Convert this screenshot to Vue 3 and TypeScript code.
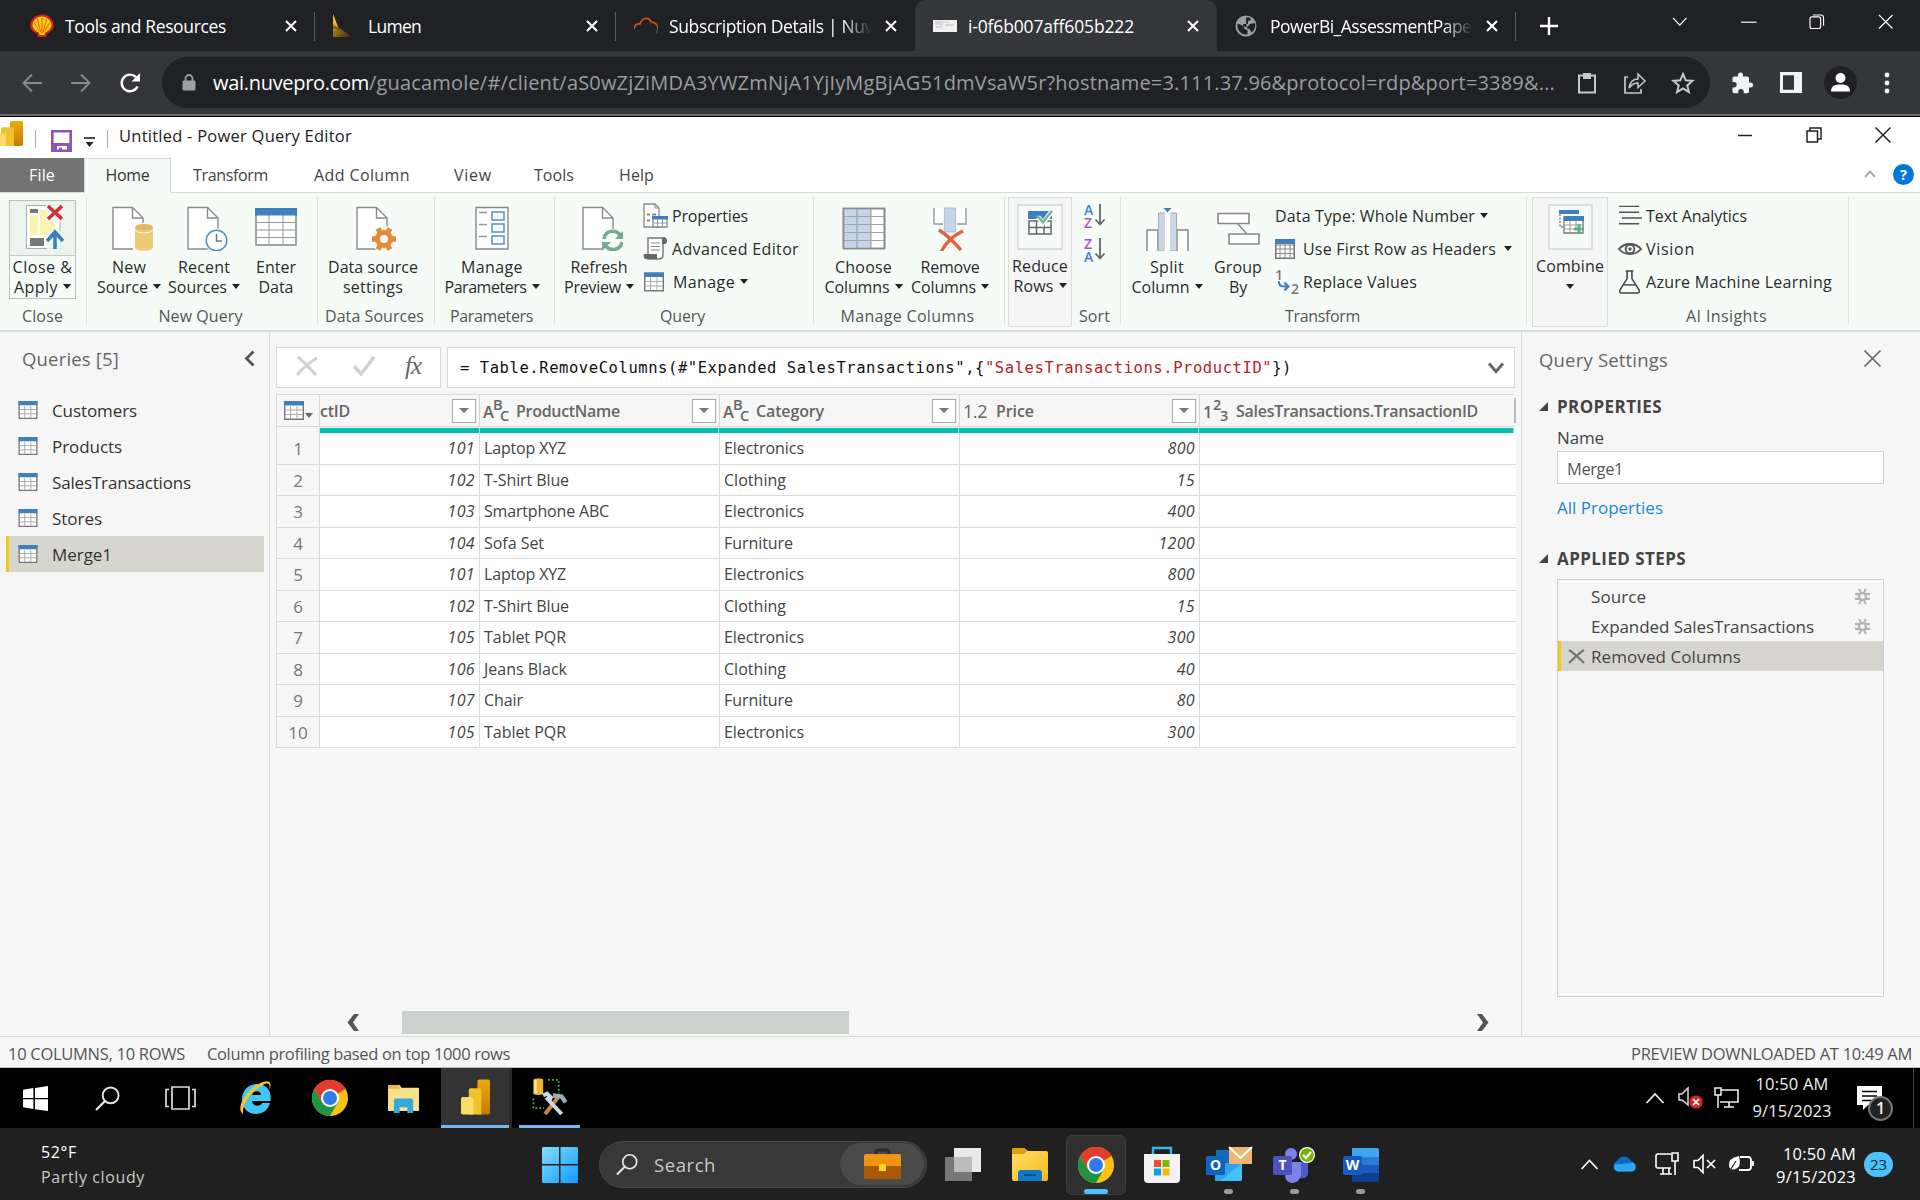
<script setup lang="ts">
interface Line { t: string; w: number; caret?: boolean }
interface Big { icon: string; w: number; lines: Line[] }
interface Small { icon?: string; t: string; w: number; caret?: boolean }

// Tracks a label so that it takes exactly the given width in pixels.
const vFit = {
  mounted(el: HTMLElement, binding: { value: number }) {
    const n = (el.textContent || '').length
    const natural = el.getBoundingClientRect().width
    if (n && natural) el.style.letterSpacing = ((binding.value - natural) / n).toFixed(3) + 'px'
  },
}

const browserTabs = [
  { icon: 'shell', title: 'Tools and Resources', w: 161, span: 315 },
  { icon: 'lumen', title: 'Lumen', w: 53, span: 301 },
  { icon: 'cloudline', title: 'Subscription Details | Nuv', w: 204, span: 299, faded: true },
  { icon: 'thumb', title: 'i-0f6b007aff605b222', w: 166, span: 302, active: true },
  { icon: 'globe', title: 'PowerBi_AssessmentPaper', w: 208, span: 299, faded: true },
]

const menu = [
  { t: 'Transform', w: 75, span: 121 },
  { t: 'Add Column', w: 96, span: 140 },
  { t: 'View', w: 38, span: 80 },
  { t: 'Tools', w: 40, span: 85 },
  { t: 'Help', w: 35, span: 80 },
]

const newQuery: Big[] = [
  { icon: 'newsource', w: 76, lines: [{ t: 'New', w: 34 }, { t: 'Source', w: 51, caret: true }] },
  { icon: 'recent', w: 74, lines: [{ t: 'Recent', w: 52 }, { t: 'Sources', w: 59, caret: true }] },
  { icon: 'enter', w: 70, lines: [{ t: 'Enter', w: 40 }, { t: 'Data', w: 35 }] },
]
const dataSource: Big[] = [{ icon: 'dsettings', w: 110, lines: [{ t: 'Data source', w: 90 }, { t: 'settings', w: 60 }] }]
const params: Big[] = [{ icon: 'params', w: 114, lines: [{ t: 'Manage', w: 62 }, { t: 'Parameters', w: 82, caret: true }] }]
const refresh: Big[] = [{ icon: 'refresh', w: 80, lines: [{ t: 'Refresh', w: 57 }, { t: 'Preview', w: 57, caret: true }] }]
const columns: Big[] = [
  { icon: 'choose', w: 87, lines: [{ t: 'Choose', w: 57 }, { t: 'Columns', w: 65, caret: true }] },
  { icon: 'remove', w: 86, lines: [{ t: 'Remove', w: 59 }, { t: 'Columns', w: 65, caret: true }] },
]
const transform: Big[] = [
  { icon: 'split', w: 80, lines: [{ t: 'Split', w: 34 }, { t: 'Column', w: 58, caret: true }] },
  { icon: 'group', w: 62, lines: [{ t: 'Group', w: 48 }, { t: 'By', w: 18 }] },
]
const querySmall: Small[] = [
  { icon: 'props', t: 'Properties', w: 76 },
  { icon: 'editor', t: 'Advanced Editor', w: 127 },
  { icon: 'tablesm', t: 'Manage', w: 62, caret: true },
]
const transformSmall: Small[] = [
  { t: 'Data Type: Whole Number', w: 200, caret: true },
  { icon: 'firstrow', t: 'Use First Row as Headers', w: 193, caret: true },
  { icon: 'replace', t: 'Replace Values', w: 114 },
]
const aiSmall: Small[] = [
  { icon: 'text', t: 'Text Analytics', w: 101 },
  { icon: 'eye', t: 'Vision', w: 49 },
  { icon: 'flask', t: 'Azure Machine Learning', w: 186 },
]

const queries = [
  { t: 'Customers', w: 85 },
  { t: 'Products', w: 70 },
  { t: 'SalesTransactions', w: 139 },
  { t: 'Stores', w: 50 },
  { t: 'Merge1', w: 60, selected: true },
]

const cellWidth: Record<string, number> = {
  'Laptop XYZ': 82, 'T-Shirt Blue': 85, 'Smartphone ABC': 125, 'Sofa Set': 60, 'Tablet PQR': 82,
  'Jeans Black': 83, Chair: 39, Electronics: 80, Clothing: 62, Furniture: 69,
}
const rows: [number, string, string, number][] = [
  [101, 'Laptop XYZ', 'Electronics', 800],
  [102, 'T-Shirt Blue', 'Clothing', 15],
  [103, 'Smartphone ABC', 'Electronics', 400],
  [104, 'Sofa Set', 'Furniture', 1200],
  [101, 'Laptop XYZ', 'Electronics', 800],
  [102, 'T-Shirt Blue', 'Clothing', 15],
  [105, 'Tablet PQR', 'Electronics', 300],
  [106, 'Jeans Black', 'Clothing', 40],
  [107, 'Chair', 'Furniture', 80],
  [105, 'Tablet PQR', 'Electronics', 300],
]
const numWidth = (n: number) => String(n).length * 9.15

const steps = [
  { t: 'Source', w: 55, gear: true },
  { t: 'Expanded SalesTransactions', w: 223, gear: true },
  { t: 'Removed Columns', w: 150, selected: true },
]
</script>

<template>
  <div class="screen">
    <svg class="defs" width="0" height="0">
      <linearGradient id="g1" x1="0" y1="0" x2="1" y2="1"><stop offset="0" stop-color="#84dcff" /><stop offset="1" stop-color="#0f9bff" /></linearGradient>
      <linearGradient id="g2" x1="0" y1="0" x2="1" y2="1"><stop offset="0" stop-color="#ffe06c" /><stop offset="1" stop-color="#f5b81f" /></linearGradient>
      <linearGradient id="g3" x1="0" y1="0" x2="1" y2="1"><stop offset="0" stop-color="#f5b400" /><stop offset="1" stop-color="#2a2620" /></linearGradient>
      <linearGradient id="g4" x1="0" y1="0" x2="0" y2="1"><stop offset="0" stop-color="#e9ad0c" /><stop offset="1" stop-color="#c77a06" /></linearGradient>
      <symbol id="close" viewBox="0 0 14 14"><path d="M2 2l10 10M12 2L2 12" stroke="currentColor" stroke-width="2.1" /></symbol>
      <symbol id="shell" viewBox="0 0 24 24"><path d="M7.500 23v-3C3 18 0 15 .3 10.500 1 4.500 6 .5 12 .5s11 4 11.700 10c.3 4.500-2.700 7.500-7.200 9.500v3z" fill="#dd1d21" /><path d="M9.300 21l-.5-2.500C4.500 16.500 2.300 14 2.500 10.500 3.200 5.500 7.500 2.500 12 2.500s8.800 3 9.500 8c.2 3.500-2 6-6.300 8l-.5 2.500z" fill="#fbce07" /><path d="M12 19V4M10.700 18L7.500 5M13.300 18L16.500 5M9.500 17.500L4.200 8.500M14.500 17.500l5.300-9" stroke="#e2562a" stroke-width=".9" /></symbol>
      <symbol id="lumen" viewBox="0 0 24 24"><path d="M0 0l5 13 14 10H0z" fill="url(#g3)" /><path d="M0 0l5 13L0 10z" fill="#f5b921" /><path d="M0 13l8 3" stroke="#6d5316" stroke-width="1.500" /></symbol>
      <symbol id="cloudline" viewBox="0 0 24 24"><path d="M0 15C1 9 5 10 6 10 8 3 15 3 17 8c4 0 7 3 7 7" fill="none" stroke="#d84d20" stroke-width="1.700" /><path d="M23.500 15l-1 5" stroke="#1d5b64" stroke-width="1.500" /></symbol>
      <symbol id="thumb" viewBox="0 0 24 24"><path d="M0 6h24v12H0z" fill="#f1f1f1" /><path d="M2 8h14M2 10h8M12 11h9M3 13h6" stroke="#b8b8b8" stroke-width=".9" /></symbol>
      <symbol id="globe" viewBox="0 0 24 24"><circle cx="11" cy="12" r="10.500" fill="#9aa0a6" /><path d="M2.500 9.500l6 2.500 1 3 3 1v4.500C6 21.500 1.500 15.500 2.500 9.500zM11 3.500h4l1 2.500-3 1v3H8.500l-1 2.500 4 .5M15 10l5-1c1 4-.5 7-3.500 9.500L14.500 15l-3-1z" fill="#202124" /></symbol>

      <symbol id="pbi" viewBox="0 0 30 36"><path d="M17 2q0-2 2-2h9q2 0 2 2v32q0 2-2 2H17z" fill="url(#g4)" /><path d="M8 11q0-2 2-2h9q2 0 2 2v25H8z" fill="#efc32c" /><path d="M0 20q0-2 2-2h8q3 0 3 3v15H2q-2 0-2-2z" fill="#f9dd68" /></symbol>
      <symbol id="tablesm" viewBox="0 0 20 19"><path d="M.7.7h18.600v17.600H.7z" fill="#fff" stroke="#777" stroke-width="1.400" /><path d="M0 0h20v4.500H0z" fill="#3f7fc0" /><path d="M6.500 5v13M13 5v13M1 9h18M1 13.500h18" stroke="#aaa" /></symbol>

      <symbol id="closeapply" viewBox="0 0 48 46"><path d="M7.500 1.500H41v43H7.500z" fill="#fff" stroke="#a9afaa" /><path d="M11 5h8v4h-8zM11 34h14v8H11z" fill="#757b76" /><path d="M11 11h8v20h-8zM21 6h6l10 17-6 8H21z" fill="#fcf3ae" /><path d="M27 0h17v18H27zM28 27h16v19H28z" fill="#f0f5f1" opacity=".85" /><path d="M29 2l14 13M43 2L29 15" stroke="#cf3030" stroke-width="3.600" /><path d="M36 45V29M28 37l8-9 8 9" fill="none" stroke="#3d7ebc" stroke-width="3.600" /></symbol>
      <symbol id="page" viewBox="0 0 48 46"><path d="M8 2.500h19.500L38 13v31H8z" fill="#fff" stroke="#8b8b8b" stroke-width="1.400" /><path d="M27.500 2.500V13H38" fill="none" stroke="#8b8b8b" stroke-width="1.400" /></symbol>
      <symbol id="newsource" viewBox="0 0 48 46"><use href="#page" /><path d="M28 18h20v28H28z" fill="#f6fbf8" /><path d="M30 23v19c0 5 18 5 18 0V23z" fill="#eec977" /><ellipse cx="39" cy="22" rx="9" ry="3" fill="#e5b95b" /><path d="M30 25c2 4 16 4 18 0" stroke="#fff" fill="none" /></symbol>
      <symbol id="recent" viewBox="0 0 48 46"><use href="#page" /><circle cx="36.500" cy="35.500" r="12" fill="#f6fbf8" /><circle cx="36.500" cy="35.500" r="10.300" fill="#fff" stroke="#4f8fcb" stroke-width="1.500" /><path d="M36.500 29v7H42" fill="none" stroke="#777" stroke-width="1.500" /></symbol>
      <symbol id="enter" viewBox="0 0 48 46"><path d="M4 4h40v36H4z" fill="#fff" stroke="#888" stroke-width="1.500" /><path d="M17 10v30M31 10v30M4 17.500h40M4 25h40M4 32.500h40" stroke="#999" /><path d="M3 3h42v7.500H3z" fill="#3f7fc0" /></symbol>
      <symbol id="dsettings" viewBox="0 0 48 46"><use href="#page" /><circle cx="35" cy="34" r="13" fill="#f6fbf8" /><path d="M23 34h24M29 23.500l12 21M41 23.500l-12 21" stroke="#e58b37" stroke-width="5.400" /><circle cx="35" cy="34" r="6.500" fill="#fff" stroke="#e58b37" stroke-width="5" /></symbol>
      <symbol id="params" viewBox="0 0 48 46"><path d="M8 2.500h32v41.500H8z" fill="#fff" stroke="#888" stroke-width="1.400" /><path d="M11 7.500h8M11 19.500h8M11 31.500h8" stroke="#999" stroke-width="1.400" /><path d="M24 7h12v8H24zM24 19h12v8H24zM24 31h12v8H24z" fill="#fff" stroke="#4f8fcb" stroke-width="1.500" /></symbol>
      <symbol id="refresh" viewBox="0 0 48 46"><use href="#page" /><path d="M27 24h21v22H27z" fill="#f6fbf8" /><path d="M29 34c1-9 12-10 16-4M47 37c-1 8-12 10-16 4" fill="none" stroke="#72ab94" stroke-width="3.500" /><path d="M49 25v9H40zM27 46v-9h9z" fill="#72ab94" /></symbol>
      <symbol id="choose" viewBox="0 0 48 46"><path d="M3.500 3.500h41v40h-41z" fill="#fff" stroke="#8b8b8b" stroke-width="1.600" /><path d="M4 4h27v39H4z" fill="#c5d5e9" /><path d="M17 4v39M31 4v39M4 11.500h40M4 19.500h40M4 27.500h40M4 35.500h40" stroke="#a3a3a3" stroke-width="1.200" /><path d="M3.500 3.500h41v40h-41z" fill="none" stroke="#8b8b8b" stroke-width="1.600" /></symbol>
      <symbol id="remove" viewBox="0 0 48 46"><path d="M8 3h8v16H8zM32 3h8v16h-8z" fill="#fff" /><path d="M8 3v16h9M40 3v16h-9" fill="none" stroke="#999" stroke-width="1.400" /><path d="M18.500 3h11v24h-11z" fill="#c5d5e9" stroke="#b4b4b4" stroke-width=".8" /><path d="M13 25c8 5 15 12 22 20M37 26c-9 4-17 11-22 21" fill="none" stroke="#e0623e" stroke-width="3.400" /></symbol>
      <symbol id="split" viewBox="0 0 48 46"><path d="M4 46V25h11v21M34 46V25h11v21" fill="#fff" stroke="#888" stroke-width="1.500" /><path d="M15.500 8h6v38h-6zM27.500 8h6v38h-6z" fill="#c9d7e8" stroke="#aaa" /><path d="M21.500 8h6v38h-6z" fill="#fff" /><path d="M20.500 3h8l-4 4.500z" fill="#3f7fc0" /></symbol>
      <symbol id="group" viewBox="0 0 48 46"><path d="M4 8.500h31v10H4zM15 29h30v10H15z" fill="#fff" stroke="#888" stroke-width="1.600" /><path d="M24 19l9 10" stroke="#888" stroke-width="1.400" /></symbol>
      <symbol id="reduce" viewBox="0 0 48 46"><path d="M2 1h44v44H2z" fill="#f6fbf8" stroke="#d2d6d2" stroke-width="1.400" /><path d="M12 7h24v8H12z" fill="#3f7fc0" /><path d="M13 17h22v13H13zM20.500 17v13M28 17v13M13 23.500h22" fill="#fff" stroke="#666" stroke-width="1.500" /><path d="M22 13l5 6 9-12" fill="none" stroke="#fff" stroke-width="5" /><path d="M21 12l6 6 9-11" fill="none" stroke="#74b59b" stroke-width="2.600" /></symbol>
      <symbol id="combine" viewBox="0 0 48 46"><path d="M3 1h43v44H3z" fill="#f6fbf8" stroke="#d2d6d2" stroke-width="1.400" /><path d="M13 6h20v4H13z" fill="#3f7fc0" /><path d="M14 10v13h3" fill="none" stroke="#777" stroke-width="1.300" stroke-dasharray="2 1.500" /><path d="M18 13h19v16H18z" fill="#fff" stroke="#777" stroke-width="1.300" /><path d="M18 12h20v5H18z" fill="#3f7fc0" /><path d="M24 17v12M30 17v8M18 21h19M18 25h12" stroke="#999" /><path d="M33 20v10M28 25h10" stroke="#5fae8c" stroke-width="3" /></symbol>

      <symbol id="props" viewBox="0 0 25 25"><path d="M1 1h11l4 4v19H1z" fill="#fff" stroke="#888" stroke-width="1.300" /><path d="M12 1v4h4" fill="none" stroke="#888" /><path d="M4 11.500h3M9 11.500h4M4 17.500h3" stroke="#888" stroke-width="2" /><path d="M10 14h14v10H10z" fill="#fff" stroke="#888" stroke-width="1.300" /><path d="M9 13h16v3.500H9z" fill="#3f7fc0" /><path d="M14.500 16v8M19.500 16v8M10 20h14" stroke="#999" /></symbol>
      <symbol id="editor" viewBox="0 0 25 25"><path d="M5 2h15c4 0 4 5 2 5h-2v12c0 3-2 4-4 4H5z" fill="#fff" stroke="#777" stroke-width="1.400" /><path d="M20 1c5 0 5 7 1 7h-2V3zM1 18h13v5H3c-2 0-3-3-2-5z" fill="#666" /><path d="M8 7h9M8 10.500h9M8 14h9" stroke="#888" stroke-width="1.200" /></symbol>
      <symbol id="firstrow" viewBox="0 0 20 20"><path d="M.8.8h18.400v18.400H.8z" fill="#fff" stroke="#777" stroke-width="1.600" /><path d="M0 0h20v5H0z" fill="#3f7fc0" /><path d="M5 3v16M10 3v16M15 3v16M1 10h18M1 14.500h18M1 6h18" stroke="#888" /></symbol>
      <symbol id="text" viewBox="0 0 25 25"><path d="M1 2.500h21M1 8.500h21M4 14.500h21M1 20.500h21" stroke="#555" stroke-width="1.500" /></symbol>
      <symbol id="eye" viewBox="0 0 25 25"><path d="M1 12.500C7 5.500 18 5.500 24 12.500 18 19.500 7 19.500 1 12.500z" fill="#fff" stroke="#555" stroke-width="2" /><circle cx="12.500" cy="12.500" r="4.500" fill="#fff" stroke="#555" stroke-width="2" /><circle cx="12.500" cy="12.500" r="1.800" fill="#555" /></symbol>
      <symbol id="flask" viewBox="0 0 25 25"><path d="M8 1h8M9.500 1v8L2 21q-1 3 2 3h16q3 0 2-3L14.500 9V1" fill="none" stroke="#444" stroke-width="1.600" /><path d="M6 15.500h12" stroke="#444" stroke-width="1.500" /></symbol>
      <symbol id="gear" viewBox="0 0 18 18"><path d="M5.500 1l7 16M12.500 1l-7 16M1 6.500h16M1 11.500h16" stroke="#b3b3b3" stroke-width="2.200" /><circle cx="9" cy="9" r="3.600" fill="#f6f6f6" stroke="#b3b3b3" stroke-width="2.200" /></symbol>
      <symbol id="down" viewBox="0 0 25 25"><path d="M7 1v20M2.500 16.500L7 21.500l4.500-5" fill="none" stroke="#666" stroke-width="1.800" /></symbol>

      <symbol id="chrome" viewBox="0 0 36 36"><circle cx="18" cy="18" r="18" fill="#fbc116" /><path d="M18 18L2.400 9A18 18 0 0 1 33.600 9z" fill="#e33b2e" /><path d="M18 9h15.600A18 18 0 0 0 2.400 9L10 22z" fill="#e33b2e" /><path d="M2.400 9A18 18 0 0 0 18 36l8-14-8 5-8-5z" fill="#229342" /><circle cx="18" cy="18" r="9" fill="#fff" /><circle cx="18" cy="18" r="7" fill="#2f7bea" /></symbol>
      <symbol id="ie" viewBox="0 0 36 36"><path d="M32 23h-8c-1 3.500-9 4.500-10-2h18.500C34 9 27 4 19 4 10 4 4 11 4 19c0 9 6 15 14 15 7 0 12-4 14-11zM14 15c1-5 9-5 9 0z" fill="#42c6f5" /><path d="M5 34C-3 29 8 8 25 2c8-3 9 3 6 8 2-6-1-8-6-5C13 11 4 24 5 34z" fill="#f7c52a" /></symbol>
      <symbol id="explorer" viewBox="0 0 34 30"><path d="M1 1h12l2 3h18v24H1z" fill="#fbe08a" /><path d="M1 1h12v4H1z" fill="#f2b73a" /><path d="M7 30V17q0-2 2-2h16q2 0 2 2v13h-6v-6h-8v6z" fill="#36a9dc" /></symbol>
      <symbol id="tools" viewBox="0 0 36 38"><path d="M2 2v14c0 2 10 2 10 0V2c0-2-10-2-10 0z" fill="#efb72e" /><path d="M4 2v14" stroke="#fbe28f" stroke-width="3" /><path d="M17 2h11v14M2 21v10h11" fill="none" stroke="#44a94a" stroke-width="1.800" stroke-dasharray="2 2" /><path d="M14 37l14-18" stroke="#c98b3a" stroke-width="4" /><path d="M31 37L15 20M12 18l4-2 4 4-2 5" fill="none" stroke="#cfd7e3" stroke-width="4" /><path d="M22 18l9 1 4 6" fill="none" stroke="#9caac0" stroke-width="4.500" /></symbol>
      <symbol id="winw" viewBox="0 0 24 24"><path d="M0 3.500l10-1.500v9.500H0zM11.500 1.800L24 0v11.500H11.500zM0 12.800h10V22L0 20.500zM11.500 12.800H24V24l-12.500-1.800z" fill="#fff" /></symbol>
      <symbol id="search" viewBox="0 0 24 24"><circle cx="15" cy="9" r="7.600" fill="none" stroke="#e6e6e6" stroke-width="1.800" /><path d="M9.500 14.500L1 23" stroke="#e6e6e6" stroke-width="2.200" /></symbol>
      <symbol id="net" viewBox="0 0 25 22"><path d="M6 3h18v12H6M10 20h10M15 15v5" fill="none" stroke="#eee" stroke-width="1.600" /><path d="M1 1h6v7H1zM4 8v13" fill="#000" stroke="#eee" stroke-width="1.500" /></symbol>
    </svg>

    <!-- browser tab strip -->
    <header class="tabstrip">
      <div v-for="(tab, i) in browserTabs" :key="i" class="btab" :class="{ active: tab.active, first: i === 0, sep: i !== 2 && i !== 3 }" :style="{ width: tab.span + 'px' }">
        <svg class="fav"><use :href="'#' + tab.icon" /></svg>
        <div class="btitle" :class="{ faded: tab.faded }"><span v-fit="tab.w">{{ tab.title }}</span></div>
        <svg class="bclose"><use href="#close" /></svg>
      </div>
      <svg class="plus" viewBox="0 0 18 18"><path d="M9 0v18M0 9h18" stroke="#fff" stroke-width="2.400" /></svg>
      <div class="winctl">
        <svg viewBox="0 0 16 16"><path d="M1 4l7 7.500L15 4" /></svg>
        <svg viewBox="0 0 16 16"><path d="M0 8.500h16" /></svg>
        <svg viewBox="0 0 16 16"><path d="M1 5q0-2 2-2h7q2 0 2 2v8q0 2-2 2H3q-2 0-2-2zM4 1h8q3 0 3 3v8" /></svg>
        <svg viewBox="0 0 16 16"><path d="M1 1l14 14M15 1L1 15" /></svg>
      </div>
    </header>

    <div class="toolbar">
      <svg class="nav dim" viewBox="0 0 20 20"><path d="M20 10H2M10 1.500L1.500 10l8.500 8.500" /></svg>
      <svg class="nav dim" viewBox="0 0 20 20"><path d="M0 10h18M10 1.500l8.500 8.500-8.500 8.500" /></svg>
      <svg class="nav" viewBox="0 0 20 20"><path d="M17.500 13.500A8.300 8.300 0 1 1 16 4.200" stroke-width="2.400" /><path d="M20 0v8.500h-8.500z" fill="#fff" stroke="none" /></svg>
      <div class="omnibox">
        <svg class="lock" viewBox="0 0 14 17"><path d="M3.500 7V4.500a3.500 3.500 0 0 1 7 0V7" fill="none" stroke="#9aa0a6" stroke-width="1.800" /><rect x=".5" y="6.500" width="13" height="10" rx="1.500" fill="#9aa0a6" /></svg>
        <span v-fit="156" class="host">wai.nuvepro.com</span><span v-fit="1186" class="path">/guacamole/#/client/aS0wZjZiMDA3YWZmNjA1YjIyMgBjAG51dmVsaW5r?hostname=3.111.37.96&amp;protocol=rdp&amp;port=3389&amp;...</span>
        <div class="omniicons">
          <svg viewBox="0 0 22 22"><path d="M3 3.500h16v17H3z" fill="none" stroke="#c6c8ca" stroke-width="2" /><path d="M7 1h8v6H7z" fill="#c6c8ca" /></svg>
          <svg viewBox="0 0 22 22"><path d="M4 5H1v16h16v-4" fill="none" stroke="#c6c8ca" stroke-width="1.700" /><path d="M5 16c1-6 4-9 9-9V2l7 7-7 6.500V11c-4 0-6 1-9 5z" fill="none" stroke="#c6c8ca" stroke-width="1.500" /></svg>
          <svg viewBox="0 0 22 22"><path d="M11 2l2.700 6.300 6.800.6-5.200 4.500 1.600 6.700-5.900-3.600-5.900 3.600 1.600-6.700L1.500 8.900l6.800-.6z" fill="none" stroke="#c6c8ca" stroke-width="2" /></svg>
        </div>
      </div>
      <div class="exticons">
        <svg viewBox="0 0 22 22"><path d="M18.500 10.500H17V6.300q0-1.800-1.800-1.800H11V3a2.500 2.500 0 0 0-5 0v1.500H2.300Q.5 4.500.5 6.300V10H2a2.700 2.700 0 0 1 0 5.400H.5v4.100q0 1.800 1.800 1.800h4v-1.500a2.700 2.700 0 0 1 5.400 0v1.500h3.500q1.800 0 1.800-1.800v-4h1.500a2.500 2.500 0 0 0 0-5z" fill="#f1f3f4" /></svg>
        <svg viewBox="0 0 22 22"><path d="M0 0h22v21H0zM3 3.200v14.600h11V3.200z" fill="#f1f3f4" fill-rule="evenodd" /></svg>
        <svg class="avatar" viewBox="0 0 33 33"><circle cx="16.500" cy="16.500" r="16.500" fill="#202124" /><circle cx="16.500" cy="12" r="5" fill="#fff" /><path d="M7 25.500c0-6 4-7 9.500-7s9.500 1 9.500 7z" fill="#fff" /></svg>
        <svg viewBox="0 0 22 22"><circle cx="11" cy="3" r="2.400" fill="#f1f3f4" /><circle cx="11" cy="11" r="2.400" fill="#f1f3f4" /><circle cx="11" cy="19" r="2.400" fill="#f1f3f4" /></svg>
      </div>
    </div>

    <!-- Power Query window -->
    <div class="titlebar">
      <svg class="applogo" viewBox="7 0 23 36" preserveAspectRatio="none"><use href="#pbi" width="30" height="36" /></svg>
      <i class="vsep"></i>
      <svg class="save" viewBox="0 0 21 22"><path d="M1.300 1.300h18.400v19.400H1.300z" fill="#fff" stroke="#8c55b0" stroke-width="2.600" /><path d="M1 13h19v8h-4v-5H6v5H1z" fill="#8c55b0" /><path d="M8 17.500h3v4H8z" fill="#8c55b0" /></svg>
      <svg class="qat" viewBox="0 0 11 10"><path d="M0 1h11" stroke="#222" stroke-width="1.600" /><path d="M1.500 5h8L5.500 10z" fill="#222" /></svg>
      <i class="vsep two"></i>
      <span v-fit="233" class="wtitle">Untitled - Power Query Editor</span>
      <div class="wctl">
        <svg viewBox="0 0 16 16"><path d="M1 8.500h14" /></svg>
        <svg viewBox="0 0 16 16"><path d="M1 4h10.500v11H1zM4 4V1h11v11h-3" /></svg>
        <svg viewBox="0 0 16 16"><path d="M.5 .5l15 15M15.500 .5l-15 15" /></svg>
      </div>
    </div>
    <nav class="menubar">
      <div class="mfile"><span v-fit="26">File</span></div>
      <div class="mhome"><span v-fit="44">Home</span></div>
      <div v-for="m in menu" :key="m.t" class="mitem" :style="{ width: m.span + 'px' }"><span v-fit="m.w">{{ m.t }}</span></div>
      <svg class="collapse" viewBox="0 0 12 10"><path d="M1 8l5-5.500L11 8" fill="none" stroke="#aaa" stroke-width="2" /></svg>
      <span class="help">?</span>
    </nav>

    <section class="ribbon">
      <div class="grp gclose">
        <div class="gbody">
          <div class="ca">
            <div class="catop"><svg class="bicon"><use href="#closeapply" /></svg></div>
            <div class="line"><span v-fit="60">Close &amp;</span></div>
            <div class="line"><span v-fit="44">Apply</span><i class="caret"></i></div>
          </div>
        </div>
        <div class="glabel"><span v-fit="41">Close</span></div>
      </div>
      <div class="grp gnew">
        <div class="gbody">
          <div v-for="b in newQuery" :key="b.icon" class="big" :style="{ width: b.w + 'px' }">
            <svg class="bicon"><use :href="'#' + b.icon" /></svg>
            <div v-for="l in b.lines" :key="l.t" class="line"><span v-fit="l.w">{{ l.t }}</span><i v-if="l.caret" class="caret"></i></div>
          </div>
        </div>
        <div class="glabel"><span v-fit="84">New Query</span></div>
      </div>
      <div class="grp gds">
        <div class="gbody">
          <div v-for="b in dataSource" :key="b.icon" class="big" :style="{ width: b.w + 'px' }">
            <svg class="bicon"><use :href="'#' + b.icon" /></svg>
            <div v-for="l in b.lines" :key="l.t" class="line"><span v-fit="l.w">{{ l.t }}</span></div>
          </div>
        </div>
        <div class="glabel"><span v-fit="99">Data Sources</span></div>
      </div>
      <div class="grp gpar">
        <div class="gbody">
          <div v-for="b in params" :key="b.icon" class="big" :style="{ width: b.w + 'px' }">
            <svg class="bicon"><use :href="'#' + b.icon" /></svg>
            <div v-for="l in b.lines" :key="l.t" class="line"><span v-fit="l.w">{{ l.t }}</span><i v-if="l.caret" class="caret"></i></div>
          </div>
        </div>
        <div class="glabel gl-par"><span v-fit="83">Parameters</span></div>
      </div>
      <div class="grp gquery">
        <div class="gbody">
          <div v-for="b in refresh" :key="b.icon" class="big" :style="{ width: b.w + 'px' }">
            <svg class="bicon"><use :href="'#' + b.icon" /></svg>
            <div v-for="l in b.lines" :key="l.t" class="line"><span v-fit="l.w">{{ l.t }}</span><i v-if="l.caret" class="caret"></i></div>
          </div>
          <div class="smalls sq">
            <div v-for="s in querySmall" :key="s.t" class="small"><svg :class="s.icon"><use :href="'#' + s.icon" /></svg><span v-fit="s.w">{{ s.t }}</span><i v-if="s.caret" class="caret"></i></div>
          </div>
        </div>
        <div class="glabel"><span v-fit="45">Query</span></div>
      </div>
      <div class="grp gcol">
        <div class="gbody">
          <div v-for="b in columns" :key="b.icon" class="big" :style="{ width: b.w + 'px' }">
            <svg class="bicon"><use :href="'#' + b.icon" /></svg>
            <div v-for="l in b.lines" :key="l.t" class="line"><span v-fit="l.w">{{ l.t }}</span><i v-if="l.caret" class="caret"></i></div>
          </div>
        </div>
        <div class="glabel"><span v-fit="134">Manage Columns</span></div>
      </div>
      <div class="folded fred">
        <svg class="bicon"><use href="#reduce" /></svg>
        <div class="line"><span v-fit="56">Reduce</span></div>
        <div class="line"><span v-fit="40">Rows</span><i class="caret"></i></div>
      </div>
      <div class="grp gsort">
        <div class="gbody sortbody">
          <div class="sort"><div><b class="a">A</b><b class="z">Z</b></div><svg><use href="#down" /></svg></div>
          <div class="sort"><div><b class="z">Z</b><b class="a">A</b></div><svg><use href="#down" /></svg></div>
        </div>
        <div class="glabel"><span v-fit="31">Sort</span></div>
      </div>
      <div class="grp gtrans">
        <div class="gbody">
          <div v-for="b in transform" :key="b.icon" class="big" :style="{ width: b.w + 'px' }">
            <svg class="bicon"><use :href="'#' + b.icon" /></svg>
            <div v-for="l in b.lines" :key="l.t" class="line"><span v-fit="l.w">{{ l.t }}</span><i v-if="l.caret" class="caret"></i></div>
          </div>
          <div class="smalls st">
            <div v-for="s in transformSmall" :key="s.t" class="small" :class="{ wide: s.icon === 'firstrow' }">
              <svg v-if="s.icon === 'firstrow'" class="firstrow"><use href="#firstrow" /></svg>
              <div v-if="s.icon === 'replace'" class="replace"><b>1</b><svg viewBox="0 0 14 12"><path d="M1 0q0 6 6 6h4M7.500 1.500L12 6l-4.500 4.500" fill="none" stroke="#3d7ebc" stroke-width="2.600" /></svg><b>2</b></div>
              <span v-fit="s.w">{{ s.t }}</span><i v-if="s.caret" class="caret"></i>
            </div>
          </div>
        </div>
        <div class="glabel gl-tr"><span v-fit="75">Transform</span></div>
      </div>
      <div class="folded fcomb">
        <svg class="bicon"><use href="#combine" /></svg>
        <div class="line"><span v-fit="68">Combine</span></div>
        <div class="line"><i class="caret solo"></i></div>
      </div>
      <div class="grp gai">
        <div class="gbody">
          <div class="smalls sa">
            <div v-for="s in aiSmall" :key="s.t" class="small"><svg><use :href="'#' + s.icon" /></svg><span v-fit="s.w">{{ s.t }}</span></div>
          </div>
        </div>
        <div class="glabel gl-ai"><span v-fit="81">AI Insights</span></div>
      </div>
    </section>

    <main class="work">
      <aside class="queries">
        <div class="qhead"><span v-fit="97">Queries [5]</span><svg viewBox="0 0 11 17"><path d="M9.500 1.500L2.500 8.500l7 7" fill="none" stroke="#555" stroke-width="2.800" /></svg></div>
        <div v-for="q in queries" :key="q.t" class="qrow" :class="{ sel: q.selected }"><svg><use href="#tablesm" /></svg><span v-fit="q.w">{{ q.t }}</span></div>
      </aside>

      <section class="center">
        <div class="fbar">
          <div class="fbtns">
            <svg viewBox="0 0 22 22"><path d="M2 2c6 5 12 11 18 18M21 3C14 7 7 13 1 20" fill="none" stroke="#d0d3d0" stroke-width="3" /></svg>
            <svg viewBox="0 0 22 22"><path d="M1 11l7 8L21 2" fill="none" stroke="#d0d3d0" stroke-width="3.600" /></svg>
            <span class="fx">fx</span>
          </div>
          <div class="finput"><code v-fit="832">= Table.RemoveColumns(#"Expanded SalesTransactions",{<em>"SalesTransactions.ProductID"</em>})</code><svg viewBox="0 0 16 12"><path d="M1 1.500l7 8 7-8" fill="none" stroke="#666" stroke-width="3" /></svg></div>
        </div>
        <div class="grid">
          <div class="ghead">
            <div class="hc h0"><svg><use href="#tablesm" /></svg><i class="gcaret"></i></div>
            <div class="hc h1"><span v-fit="30">ctID</span><i class="flt"></i></div>
            <div class="hc h2"><div class="abc"><b>A</b><b class="up">B</b><b class="dn">C</b></div><span v-fit="104">ProductName</span><i class="flt"></i></div>
            <div class="hc h2"><div class="abc"><b>A</b><b class="up">B</b><b class="dn">C</b></div><span v-fit="68">Category</span><i class="flt"></i></div>
            <div class="hc h2"><div class="abc dec"><span v-fit="24">1.2</span></div><span v-fit="38">Price</span><i class="flt"></i></div>
            <div class="hc h5"><div class="abc"><b>1</b><b class="up">2</b><b class="dn">3</b></div><span v-fit="242">SalesTransactions.TransactionID</span></div>
          </div>
          <div class="gbar"><i class="b0"></i><i class="b1"></i><i class="b2"></i><i class="b2"></i><i class="b2"></i><i class="b5"></i></div>
          <div v-for="(r, i) in rows" :key="i" class="grow">
            <div class="c0">{{ i + 1 }}</div>
            <div class="c1 num"><span v-fit="numWidth(r[0])">{{ r[0] }}</span></div>
            <div class="c2"><span v-fit="cellWidth[r[1]]">{{ r[1] }}</span></div>
            <div class="c2"><span v-fit="cellWidth[r[2]]">{{ r[2] }}</span></div>
            <div class="c2 num"><span v-fit="numWidth(r[3])">{{ r[3] }}</span></div>
            <div class="c5"></div>
          </div>
        </div>
        <div class="hscroll">
          <svg viewBox="0 0 13 17"><path d="M8 0h5L7 8.500 13 17H8L1.500 8.500z" fill="#555" /></svg>
          <div class="thumb"></div>
          <svg viewBox="0 0 13 17"><path d="M0 0h5l6.500 8.500L5 17H0l6-8.500z" fill="#555" /></svg>
        </div>
      </section>

      <aside class="settings">
        <div class="shead"><span v-fit="129">Query Settings</span><svg viewBox="0 0 17 17"><path d="M.5.500l16 16M16.500.500l-16 16" stroke="#666" stroke-width="1.700" /></svg></div>
        <div class="sect"><i></i><span v-fit="105">PROPERTIES</span></div>
        <div class="sname"><span v-fit="47">Name</span></div>
        <div class="sinput"><span v-fit="56">Merge1</span></div>
        <div class="sall"><span v-fit="106">All Properties</span></div>
        <div class="sect"><i></i><span v-fit="129">APPLIED STEPS</span></div>
        <div class="steps">
          <div v-for="s in steps" :key="s.t" class="step" :class="{ sel: s.selected }">
            <svg class="sx" viewBox="0 0 17 15"><path v-if="s.selected" d="M1 1c6 4 10 8 15 13M16 1C10 5 6 9 1 14" fill="none" stroke="#777" stroke-width="2.200" /></svg>
            <span v-fit="s.w">{{ s.t }}</span>
            <svg v-if="s.gear" class="sgear"><use href="#gear" /></svg>
          </div>
        </div>
      </aside>
    </main>

    <footer class="status">
      <span v-fit="177">10 COLUMNS, 10 ROWS</span><span v-fit="303" class="prof">Column profiling based on top 1000 rows</span><span v-fit="281" class="prev">PREVIEW DOWNLOADED AT 10:49 AM</span>
    </footer>

    <!-- remote desktop taskbar -->
    <div class="rbar">
      <div class="ri"><svg width="25" height="25"><use href="#winw" /></svg></div>
      <div class="ri"><svg width="25" height="25"><use href="#search" /></svg></div>
      <div class="ri tv"><svg width="31" height="24" viewBox="0 0 31 24"><path d="M7 1h17v22H7zM4 3.500H1v17h3M27 3.500h3v17h-3" fill="none" stroke="#ddd" stroke-width="1.700" /></svg></div>
      <div class="ri nudge"><svg width="36" height="36"><use href="#ie" /></svg></div>
      <div class="ri nudge"><svg width="36" height="36"><use href="#chrome" /></svg></div>
      <div class="ri nudge"><svg width="33" height="29"><use href="#explorer" /></svg></div>
      <div class="ri on"><svg width="29" height="36"><use href="#pbi" /></svg></div>
      <div class="ri on2"><svg width="36" height="37"><use href="#tools" /></svg></div>
      <div class="rtray">
        <svg width="20" height="12" viewBox="0 0 20 12"><path d="M1.500 11L10 2l8.500 9" fill="none" stroke="#eee" stroke-width="1.800" /></svg>
        <svg width="26" height="24" viewBox="0 0 26 24"><path d="M1 8h3l6-6v17l-6-5H1z" fill="none" stroke="#ddd" stroke-width="1.500" /><circle cx="18" cy="16" r="6.600" fill="#d9232b" /><path d="M15 13l6 6M21 13l-6 6" stroke="#fff" stroke-width="1.700" /></svg>
        <svg width="25" height="22"><use href="#net" /></svg>
        <div class="clock"><span v-fit="73">10:50 AM</span><span v-fit="79">9/15/2023</span></div>
        <div class="notif"><svg width="25" height="24" viewBox="0 0 25 24"><path d="M0 0h25v19H11l-5 5v-5H0z" fill="#fff" /><path d="M5 5.500h15M5 10h15M5 14.500h10" stroke="#000" stroke-width="1.500" /></svg><b>1</b></div>
      </div>
    </div>

    <!-- host taskbar -->
    <div class="hbar">
      <div class="weather"><span v-fit="36">52°F</span><span v-fit="104" class="w2">Partly cloudy</span></div>
      <svg class="start" viewBox="0 0 36 36"><path d="M1 0h16v17H0V1zM18.500 0H35l1 1v16H18.500zM0 18.500h17V36H1l-1-1zM18.500 18.500H36V35l-1 1H18.500z" fill="url(#g1)" /></svg>
      <div class="spill">
        <svg width="22" height="23"><use href="#search" /></svg><span v-fit="62">Search</span>
        <div class="chip"><svg width="37" height="30" viewBox="0 0 37 30"><path d="M12 6V3q0-2 2-2h9q2 0 2 2v3" fill="none" stroke="#2b2b2b" stroke-width="3" /><rect y="5" width="37" height="25" rx="2" fill="#ef9312" /><path d="M0 17h37v11q0 2-2 2H2q-2 0-2-2z" fill="#a95a08" /><path d="M15 15h7v7h-7z" fill="#ffd21e" /></svg></div>
      </div>
      <div class="apps">
        <div><svg width="36" height="34" viewBox="0 0 36 34"><path d="M0 9h27v24H0z" fill="#777" /><path d="M9 0h27v24H9z" fill="#e9e9e9" /><path d="M9 9h18v15H9z" fill="#bcbcbc" /></svg></div>
        <div><svg width="36" height="33" viewBox="0 0 36 33"><path d="M0 2q0-2 2-2h10l4 3h18q2 0 2 2v26q0 2-2 2H2q-2 0-2-2z" fill="url(#g2)" /><path d="M0 2q0-2 2-2h10l3 3-3 3H0z" fill="#dfa00e" /><path d="M6 33V25q0-3 3-3h18q3 0 3 3v8z" fill="#1278c8" /><path d="M12 27h12" stroke="#0b4f91" stroke-width="2" /></svg></div>
        <div class="cur"><svg width="36" height="36"><use href="#chrome" /></svg></div>
        <div><svg width="36" height="36" viewBox="0 0 36 36"><path d="M9 8V1h18v7" fill="none" stroke="#36b5ec" stroke-width="2.400" /><path d="M0 7h36v25q0 4-4 4H4q-4 0-4-4z" fill="#f2f2f2" /><path d="M10 13h7v7h-7z" fill="#f25022" /><path d="M18.500 13h7v7h-7z" fill="#7fba00" /><path d="M10 21.500h7v7h-7z" fill="#00a4ef" /><path d="M18.500 21.500h7v7h-7z" fill="#ffb900" /></svg></div>
        <div class="run"><svg width="46" height="36" viewBox="0 0 46 36"><path d="M10 3h26v20l-26-2z" fill="#1769bd" /><path d="M9 16h27v16q0 2-2 2H9z" fill="#2ba3e8" /><path d="M36 16L14 34h20q2 0 2-2z" fill="#45c0f5" /><rect y="9" width="19" height="19" rx="1.500" fill="#0f64bd" /><path d="M23 0h23v17H23z" fill="#efb573" /><path d="M23 0l11.500 11L46 0" fill="none" stroke="#fff" stroke-width="1.800" /></svg><b>O</b></div>
        <div class="run"><svg width="43" height="36" viewBox="0 0 43 36"><circle cx="18" cy="7" r="6" fill="#7b83eb" /><path d="M22 15h13v12q-1 5-8 4z" fill="#5059c9" /><path d="M12 15h16v13q-2 8-9 8-7-1-7-8z" fill="#7b83eb" /><rect y="9" width="19" height="19" rx="1.500" fill="#4b53bc" /><circle cx="34" cy="8" r="8" fill="#fff" /><circle cx="34" cy="8" r="6.800" fill="#72b500" /><path d="M30 8l3 3 5-6" fill="none" stroke="#fff" stroke-width="2.200" /></svg><b>T</b></div>
        <div class="run"><svg width="36" height="34" viewBox="0 0 36 34"><path d="M9 0h25q2 0 2 2v7H9z" fill="#41a5ee" /><path d="M9 9h27v8H9z" fill="#2b7cd3" /><path d="M9 17h27v8H9z" fill="#185abd" /><path d="M9 25h27v7q0 2-2 2H9z" fill="#103f91" /><rect y="8" width="19" height="19" rx="1.500" fill="#185abd" /></svg><b class="wl">W</b></div>
      </div>
      <div class="htray">
        <svg width="19" height="11" viewBox="0 0 19 11"><path d="M1.500 10L9.500 1.500l8 8.500" fill="none" stroke="#fff" stroke-width="1.600" /></svg>
        <svg width="25" height="16" viewBox="0 0 25 16"><path d="M6 15.500a5.500 5.500 0 0 1-1-10.500A8 8 0 0 1 19 5a5.500 5.500 0 0 1 0 10.500z" fill="#0f6cc4" /><path d="M6 15.500c-4-1-5-4-3-7 6-1 9 0 18-2 4 2 4 8-1 9z" fill="#28a8ea" /></svg>
        <svg width="25" height="24" viewBox="0 0 25 24"><path d="M16 2H3q-2 0-2 2v10q0 2 2 2h13M5 22h12M8 16v6M14 16v6" fill="none" stroke="#fff" stroke-width="1.600" /><path d="M17 1h6v8h-6zM20 9v14" fill="none" stroke="#fff" stroke-width="1.600" /></svg>
        <svg width="24" height="20" viewBox="0 0 24 20"><path d="M1 6.500h4l5-5v17l-5-5H1z" fill="none" stroke="#fff" stroke-width="1.600" /><path d="M14 6l8 8M22 6l-8 8" stroke="#fff" stroke-width="1.700" /></svg>
        <svg width="26" height="18" viewBox="0 0 26 18"><path d="M12 2h8q3 0 3 3v7q0 3-3 3h-9M25 6v5" fill="none" stroke="#fff" stroke-width="1.800" /><path d="M11 1Q0 3 1 11q1 4 5 3.500Q14 13 11 1z" fill="#fff" /><path d="M1 17L8 6" stroke="#202020" stroke-width="1.200" /></svg>
        <div class="hclock"><span v-fit="73">10:50 AM</span><span v-fit="80">9/15/2023</span></div>
        <div class="badge"><span>23</span></div>
      </div>
    </div>
  </div>
</template>

<style>
body { background: #f6f6f6; overflow: hidden; }
</style>

<style scoped>
.screen { width: 1920px; height: 1200px; overflow: hidden; font-family: "Open Sans", "Noto Sans", sans-serif; display: flex; flex-direction: column; background: #f6f6f6; color: #333; }
.screen *, .screen *::before { box-sizing: border-box; }
.defs { position: absolute; }
svg { display: block; flex: none; overflow: visible; }
span { white-space: nowrap; display: inline-block; flex: none; }

.tabstrip { height: 51px; background: #202124; display: flex; align-items: center; flex: none; }
.btab { height: 51px; display: flex; align-items: center; padding: 0 17px 0 18px; position: relative; color: #fff; flex: none; }
.btab.first { padding-left: 30px; }
.btab.sep::before { content: ""; position: absolute; right: 0; top: 12px; width: 1px; height: 29px; background: #5b5d61; }
.btab.active { background: #35363a; border-radius: 11px 11px 0 0; }
.fav { width: 24px; height: 24px; }
.btitle { flex: 1; min-width: 0; margin: 0 10px 0 11px; overflow: hidden; font-size: 17.500px; line-height: 26px; }
.btitle.faded { -webkit-mask-image: linear-gradient(90deg, #000 84%, transparent 99%); mask-image: linear-gradient(90deg, #000 84%, transparent 99%); }
.bclose { width: 14px; height: 14px; }
.plus { width: 18px; height: 18px; margin-left: 24px; }
.winctl { margin-left: auto; display: flex; gap: 53px; padding: 0 27px 8px 0; }
.winctl svg { width: 15.500px; height: 15.500px; fill: none; stroke: #fff; stroke-width: 1.200; }

.toolbar { height: 66px; background: #35363a; display: flex; align-items: center; padding: 0 22px 2px; border-bottom: 1px solid #000; box-shadow: inset 0 -2px #6b6b6b; flex: none; }
.nav { width: 20px; height: 20px; margin-right: 29px; fill: none; stroke: #fff; stroke-width: 2; }
.nav.dim { stroke: #87888b; }
.omnibox { width: 1548px; height: 51px; border-radius: 26px; background: #202124; display: flex; align-items: center; padding-left: 20px; margin-left: -7px; font-size: 20px; color: #9a9da1; flex: none; }
.lock { width: 14px; height: 17px; margin-right: 17px; }
.host { color: #fff; }
.omniicons { display: flex; gap: 26px; margin-left: 21px; }
.omniicons svg { width: 22px; height: 22px; }
.exticons { display: flex; align-items: center; margin-left: 22px; }
.exticons svg { width: 22px; height: 22px; margin-right: 26px; }
.exticons svg:nth-child(2) { margin-right: 22px; }
.exticons svg.avatar { width: 33px; height: 33px; margin-right: 19px; }
.exticons svg:last-child { margin-right: 0; }

.titlebar { height: 41px; background: #fff; display: flex; align-items: center; flex: none; padding-bottom: 5px; }
.applogo { width: 23px; height: 25px; margin-bottom: 3px; }
.vsep { width: 1px; height: 18px; background: #aaa; margin: 8px 0 0 12px; }
.vsep.two { margin-left: 12px; }
.save { width: 21px; height: 22px; margin: 12px 0 0 15px; }
.qat { width: 11px; height: 10px; margin: 14px 0 0 12px; }
.wtitle { margin-left: 11px; font-size: 16.500px; color: #222; }
.wctl { margin-left: auto; display: flex; gap: 53px; padding-right: 29px; }
.wctl svg { width: 16px; height: 16px; fill: none; stroke: #222; stroke-width: 1.500; }

.menubar { height: 35px; background: #fff; display: flex; align-items: stretch; border-bottom: 1.500px solid #d9dcd9; flex: none; font-size: 16px; line-height: 35px; color: #444; }
.mfile { width: 84px; background: #737373; color: #fff; text-align: center; }
.mhome { width: 87px; background: #f6fbf8; border: 1px solid #d5d8d5; border-bottom: 0; text-align: center; margin-bottom: -2px; line-height: 33px; color: #333; }
.mitem { padding-left: 22px; }
.collapse { width: 12px; height: 10px; margin: 11px 17px 0 auto; }
.help { width: 21px; height: 21px; border-radius: 50%; background: #0078d7; color: #fff; font-size: 15px; font-weight: 700; line-height: 21px; text-align: center; margin: 6px 6px 0 0; }

.ribbon { height: 139px; background: #f6fbf8; border-bottom: 2px solid #d9dcda; display: flex; padding-top: 4px; flex: none; font-size: 16px; color: #2b2b2b; }
.grp { height: 128px; border-right: 1px solid #dfe3e0; flex: none; }
.gbody { height: 108px; display: flex; }
.glabel { line-height: 23px; text-align: center; color: #555; white-space: nowrap; padding-right: 3px; }
.gclose { width: 87px; padding-left: 9px; }
.gclose .glabel { padding-right: 10px; }
.gnew { width: 231px; } .gnew .gbody { padding-left: 4px; }
.gds { width: 117px; } .gds .gbody { padding-left: 0; }
.gpar { width: 120px; } .glabel.gl-par { padding-right: 6px; }
.gquery { width: 259px; } .gquery .gbody { padding-left: 4px; }
.gcol { width: 191px; } .gcol .gbody { padding-left: 6px; }
.gsort { width: 49px; }
.gtrans { width: 406px; } .gtrans .gbody { padding-left: 6px; }
.glabel.gl-tr { padding-right: 2px; }
.gai { width: 241px; } .glabel.gl-ai { padding-right: 3px; }
.ca { width: 67px; height: 99px; margin-top: 3px; border: 1.500px solid #b9bfba; }
.catop { height: 55px; background: #edf3ee; border-bottom: 1px solid #c5cac6; display: flex; justify-content: center; padding-top: 3px; margin-bottom: 2px; }
.big { padding-top: 8px; display: flex; flex-direction: column; align-items: center; flex: none; }
.bicon { width: 48px; height: 46px; }
.big .bicon, .folded .bicon { margin-bottom: 7px; }
.line { height: 19.500px; line-height: 19.500px; display: flex; justify-content: center; align-items: center; }
.caret { width: 0; height: 0; border: 4.500px solid transparent; border-top: 5px solid #222; border-bottom: 0; margin-left: 5px; margin-bottom: 1px; flex: none; }
.caret.solo { margin: 0; }
.folded { height: 130px; border: 1.500px solid #dcdfdc; background: #f5f5f5; display: flex; flex-direction: column; align-items: center; padding-top: 6px; flex: none; }
.fred { width: 64px; margin-left: 3px; }
.fcomb { width: 76px; margin-left: 5px; }
.smalls { padding-top: 2px; }
.small { height: 33px; display: flex; align-items: center; }
.small svg { width: 25px; height: 25px; }
.small svg.tablesm { width: 20px; height: 20px; margin: 0 5px 0 1px; }
.sq { padding-left: 4px; } .sq .small span { margin-left: 4px; }
.sa { padding-left: 10px; } .sa .small span { margin-left: 4px; } .sa svg { width: 24px; height: 24px; }
.st { padding-left: 6px; }
.small svg.firstrow { width: 20px; height: 20px; margin-right: 8px; }
.small.wide .caret { margin-left: 8px; }
.replace { width: 28px; display: flex; font-size: 14px; color: #777; align-items: center; }
.replace b { font-weight: 600; line-height: 14px; margin-top: -14px; width: 8px; flex: none; }
.replace b:last-child { margin-top: 14px; }
.replace svg { width: 12px; height: 11px; margin: 10px 1px 0 -5px; }
.sortbody { flex-direction: column; padding: 6px 0 0 12px; }
.sort { display: flex; height: 34px; }
.sort div { display: grid; grid-template-rows: 13px 13px; width: 10px; }
.sort b { font-size: 14px; line-height: 13px; font-weight: 600; }
.sort .a { color: #3c87cc; } .sort .z { color: #a35cb8; }
.sort svg { width: 25px; height: 25px; margin-left: -1px; }

.work { height: 704px; display: flex; flex: none; }
.queries { width: 270px; border-right: 1.500px solid #d6d7cf; padding-left: 6px; }
.qhead { height: 60px; display: flex; align-items: center; justify-content: space-between; padding: 0 14px 7px 16px; font-size: 18.500px; color: #666; }
.qhead svg { width: 11px; height: 17px; }
.qrow { height: 36px; width: 258px; display: flex; align-items: center; padding-left: 12px; font-size: 17px; color: #333; }
.qrow svg { width: 20px; height: 18px; margin-right: 14px; }
.qrow.sel { background: #d6d6ce; box-shadow: inset 3px 0 #f2c811; }

.center { width: 1252px; border-right: 1.500px solid #d6d7cf; padding: 15px 6px 0 6px; display: flex; flex-direction: column; }
.fbar { display: flex; gap: 6px; height: 41px; }
.fbtns { width: 165px; background: #fff; border: 1.500px solid #d9dad2; display: flex; align-items: center; padding-left: 19px; }
.fbtns svg { width: 22px; height: 22px; margin-right: 35px; margin-bottom: 3px; }
.fx { font: italic 25px/30px "Liberation Serif", serif; color: #666; margin-left: -5px; margin-bottom: 3px; letter-spacing: -1px; }
.finput { flex: 1; background: #fff; border: 1.500px solid #d9dad2; display: flex; align-items: center; justify-content: space-between; padding: 0 10px 0 12px; }
.finput code { font: 15.500px "DejaVu Sans Mono", monospace; color: #111; white-space: pre; }
.finput em { font-style: normal; color: #b32424; }
.finput svg { width: 16px; height: 12px; }
.grid { margin-top: 6px; width: 1238px; border-top: 1.500px solid #d9dad2; border-left: 1.500px solid #d9dad2; }
.ghead { display: flex; height: 31px; }
.hc { display: flex; align-items: center; border-right: 1px solid #d6d7cf; font-size: 16px; font-weight: 600; color: #666; flex: none; }
.h0 { width: 43px; padding-left: 7px; } .h0 svg { width: 20px; height: 19px; }
.gcaret { border: 4px solid transparent; border-top: 5px solid #666; border-bottom: 0; margin: 10px 0 0 1px; }
.h1 { width: 160px; } .h2 { width: 240px; padding-left: 3px; } .h5 { width: 316px; padding-left: 3px; border-right: 2px solid #bbb; height: 25px; margin-top: 3px; }
.flt { width: 24px; height: 24px; border: 1.500px solid #a8a8a8; background: #fff; margin: 0 3px 0 auto; position: relative; }
.flt::before { content: ""; position: absolute; left: 6px; top: 8px; border: 5px solid transparent; border-top: 5px solid #777; border-bottom: 0; }
.abc { width: 33px; display: flex; align-items: center; color: #666; height: 30px; }
.abc b { font-weight: 600; width: 9px; font-size: 16.500px; line-height: 16px; margin-top: 2px; flex: none; }
.abc .up { margin-top: -11px; width: 7px; font-size: 14.500px; margin-left: 1px; } .abc .dn { margin-top: 10px; font-size: 14.500px; }
.abc.dec { font-size: 18px; font-weight: 500; }
.gbar { display: flex; height: 7px; padding-top: 1px; border-top: 1px solid #d6d7cf; }
.gbar i { height: 6px; background: #01beb0; border-right: 1px solid #a9dcd7; }
.gbar .b0 { width: 43px; background: #f6f6f6; border-bottom: 1px solid #d6d7cf; border-right-color: #d6d7cf; }
.b1 { width: 160px; } .b2 { width: 240px; } .b5 { width: 316px; }
.grow { display: flex; height: 31.500px; font-size: 16px; line-height: 31px; color: #444; }
.grow > div { border-right: 1px solid #d9dbd8; border-bottom: 1px solid #d9dbd8; background: #fff; flex: none; }
.grow .c0 { width: 43px; background: #f6f6f6; text-align: center; font-size: 17px; color: #777; }
.grow .c1 { width: 160px; } .grow .c2 { width: 240px; padding-left: 4px; } .grow .c5 { width: 316px; border-right: 0; }
.grow .num { text-align: right; padding-right: 4px; font-style: italic; }
.hscroll { margin-top: auto; height: 26px; display: flex; align-items: center; padding: 0 25px 2px 70px; }
.hscroll svg { width: 13px; height: 17px; }
.thumb { width: 447px; height: 23px; background: #cdd1cd; margin: 0 auto 0 43px; }

.settings { flex: 1; padding-left: 17px; font-size: 17px; }
.shead { height: 54px; display: flex; align-items: center; justify-content: space-between; padding-right: 39px; font-size: 18.500px; color: #666; }
.shead svg { width: 17px; height: 17px; margin-bottom: 2px; }
.sect { display: flex; height: 41px; align-items: center; font-weight: 700; color: #444; }
.sect i { border-left: 9px solid transparent; border-bottom: 9px solid #444; margin-right: 9px; }
.sname { margin-left: 18px; height: 24px; line-height: 22px; color: #444; }
.sinput { margin-left: 18px; width: 327px; height: 33px; background: #fff; border: 1.500px solid #d0cec9; padding-left: 9px; line-height: 33px; font-size: 16.500px; color: #555; }
.sall { margin-left: 18px; height: 54px; line-height: 48px; color: #1a87d7; }
.steps { margin-left: 18px; width: 327px; height: 418px; border: 1.500px solid #d0cec9; padding-top: 1px; }
.step { height: 30px; display: flex; align-items: center; padding-left: 10px; color: #444; }
.step.sel { background: #d6d6ce; box-shadow: inset 3px 0 #f2c811; }
.sx { width: 17px; height: 15px; margin-right: 6px; }
.sgear { width: 17px; height: 17px; margin-left: auto; margin-right: 12px; }

.status { height: 32px; border-top: 1.500px solid #d6d7cf; border-bottom: 1px solid #bbb; display: flex; align-items: center; padding: 2px 8px 0 8px; font-size: 16.500px; color: #555; flex: none; }
.prof { margin-left: 22px; } .prev { margin-left: auto; }

.rbar { height: 60px; background: #000; display: flex; flex: none; }
.ri { width: 73.500px; display: flex; align-items: center; justify-content: center; flex: none; }
.ri:first-child { width: 71px; }
.ri.tv { padding-right: 2px; }
.ri.nudge { padding-left: 3px; }
.on { width: 68px; background: #333; border-bottom: 3px solid #76b9ed; box-shadow: 3px 0 #292929; padding-left: 2px; margin-left: 2px; }
.on2 { width: 61px; border-bottom: 3px solid #76b9ed; margin-left: 10px; }
.rtray { margin-left: auto; display: flex; align-items: center; padding-right: 6px; color: #eee; }
.rtray > svg { margin-right: 13px; }
.rtray > svg:nth-child(2) { margin-right: 10px; }
.clock { display: flex; flex-direction: column; align-items: center; font-size: 16.500px; line-height: 27px; margin-left: 1px; width: 78px; height: 60px; padding-top: 2px; }
.notif { width: 57px; margin-left: 26px; border-right: 1px solid #444; position: relative; height: 60px; padding-top: 18px; }
.notif b { position: absolute; left: 11px; top: 28px; width: 25px; height: 25px; border-radius: 50%; background: #222; border: 2px solid #777; font-size: 16px; line-height: 20px; text-align: center; font-weight: 600; }

.hbar { height: 72px; background: #202020; display: flex; align-items: center; color: #fff; flex: none; }
.weather { width: 501px; margin-left: 41px; display: flex; flex-direction: column; font-size: 16px; line-height: 25px; align-items: flex-start; padding-top: 1px; }
.w2 { color: #c8c8c8; }
.start { width: 36px; height: 36px; margin-top: 2px; }
.spill { width: 328px; height: 47px; margin: 0 0 0 21px; border-radius: 24px; background: #383838; border: 1.500px solid #484848; display: flex; align-items: center; padding: 0 2px 0 16px; font-size: 18.500px; color: #c9c9c9; flex: none; }
.spill span { margin-left: 16px; }
.chip { margin-left: auto; width: 84px; height: 42px; border-radius: 21px; background: #4a4a4a; display: flex; align-items: center; justify-content: center; }
.apps { display: flex; margin-left: 3px; }
.apps > div { width: 66px; height: 72px; display: flex; align-items: center; justify-content: center; position: relative; padding-top: 1px; }
.apps > div:first-child { width: 67px; padding-right: 1px; }
.apps .cur { width: 60px; height: 60px; margin: 7px 3px 5px; background: #303030; border: 1px solid #3d3d3d; border-radius: 6px; padding: 0 0 1px; }
.cur::before, .run::before { content: ""; position: absolute; background: #4cc2ff; width: 24px; height: 5px; border-radius: 3px; bottom: 0; left: 17px; }
.run::before { background: #9a9a9a; width: 9px; height: 5px; bottom: 6px; left: 29px; }
.run svg { margin-left: 1px; }
.run b { position: absolute; left: 12px; top: 28px; font-size: 14px; line-height: 18px; width: 17px; text-align: center; }
.run:nth-child(6) b { left: 13px; }
.run b.wl { left: 17px; }
.htray { margin-left: auto; display: flex; align-items: center; padding-right: 27px; }
.htray > svg { margin-right: 13px; }
.htray > svg:nth-child(1) { margin-right: 12px; }
.htray > svg:nth-child(2) { margin-right: 18px; margin-left: 1px; }
.htray > svg:nth-child(4) { margin-right: 11px; }
.htray > svg:nth-child(5) { margin-right: 21px; }
.hclock { display: flex; flex-direction: column; align-items: flex-end; font-size: 16.500px; line-height: 23px; width: 81px; padding-top: 1px; }
.badge { width: 29px; height: 25px; border-radius: 13px; background: #4cc2ff; color: #0a2533; font-size: 15px; line-height: 24px; text-align: center; margin-left: 8px; }
</style>
